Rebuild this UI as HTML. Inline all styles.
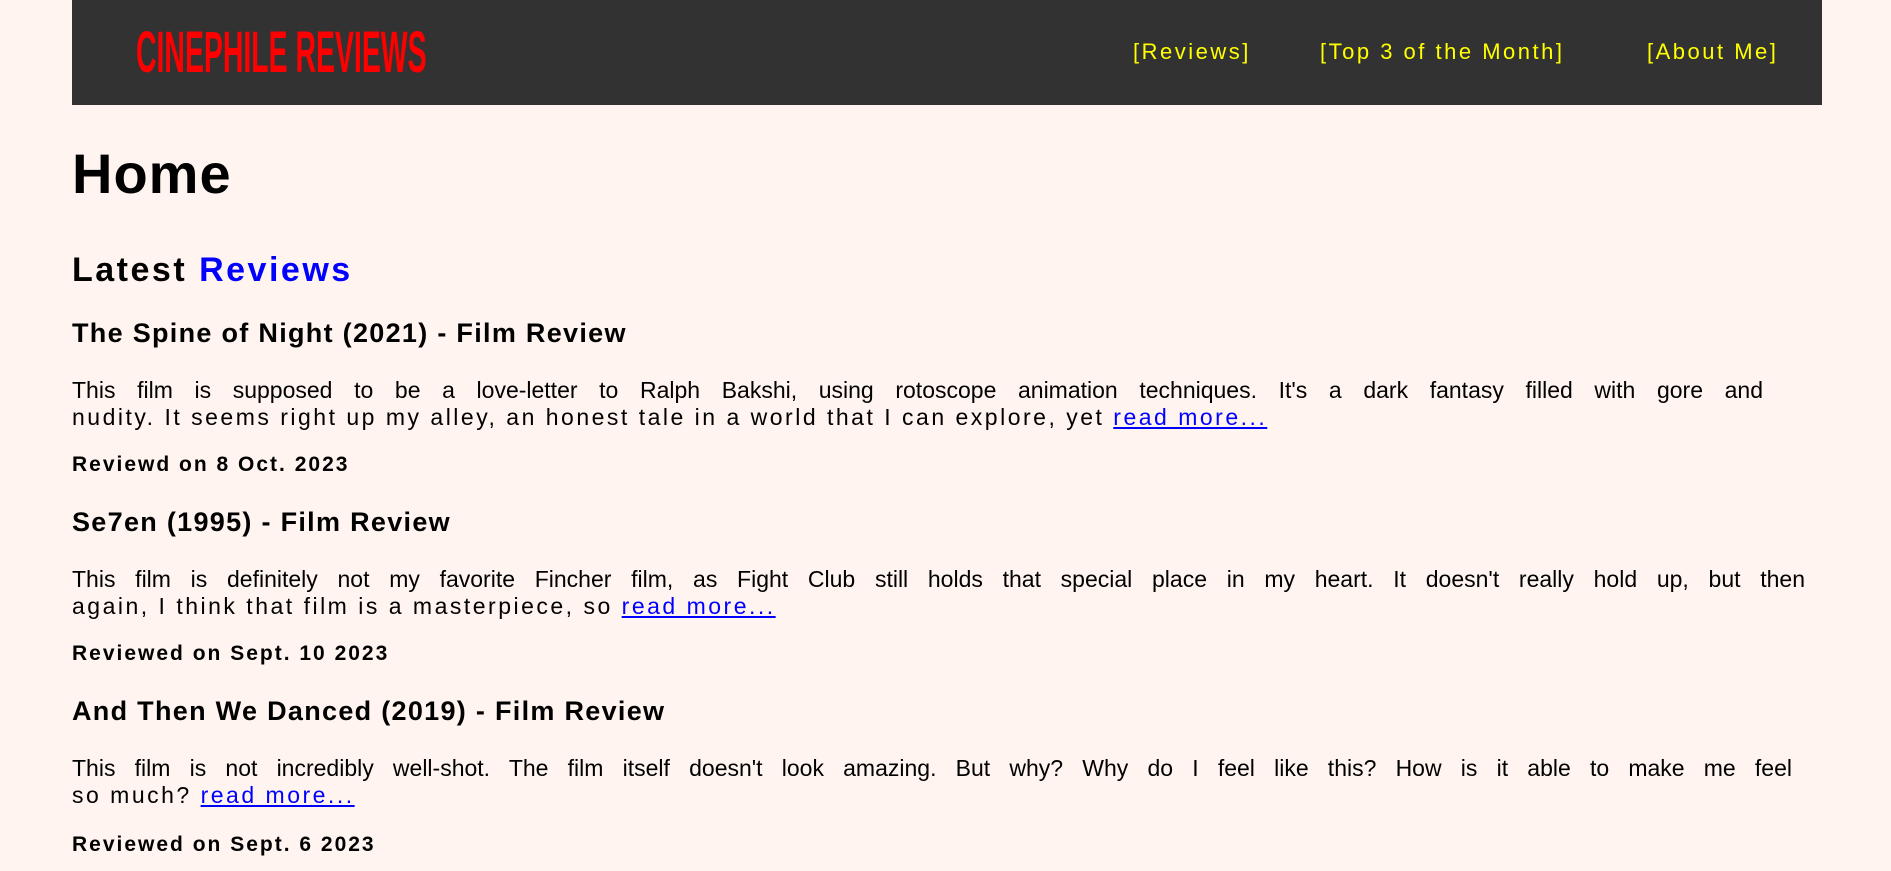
<!DOCTYPE html>
<html><head><meta charset="utf-8"><style>
body{margin:0;width:1891px;height:871px;background:#fff4ef;font-family:"Liberation Sans",sans-serif;color:#000;overflow:hidden;position:relative}
.hdr{position:absolute;left:72px;top:0;width:1750px;height:105px;background:#323232}
.logo{position:absolute;left:136px;top:23px;font-size:58px;line-height:60px;font-weight:bold;color:#ff0000;transform:scaleX(0.49);transform-origin:left top;white-space:nowrap;letter-spacing:0px}
.nav{position:absolute;top:38px;font-size:22px;line-height:28px;color:#ffff00;white-space:nowrap;letter-spacing:2.5px}
.a{position:absolute;left:72px;white-space:nowrap}
h1{position:absolute;left:72px;top:144px;margin:0;font-size:56px;line-height:60px;font-weight:bold;letter-spacing:1px}
.lat{top:250px;font-size:34px;line-height:40px;font-weight:bold;letter-spacing:2.5px}
.t{font-size:27px;line-height:30px;font-weight:bold;letter-spacing:1.3px}
.p{position:absolute;left:72px;font-size:23px;line-height:27px;letter-spacing:2.5px}
.p .j{display:block;text-align:justify;text-align-last:justify;letter-spacing:0}
.d{font-size:21px;line-height:26px;font-weight:bold;letter-spacing:2px}
a{color:#0000ff;text-decoration:underline}
</style></head><body>
<div class="hdr"></div>
<div class="logo">CINEPHILE REVIEWS</div>
<div class="nav" style="left:1133px">[Reviews]</div>
<div class="nav" style="left:1320px">[Top 3 of the Month]</div>
<div class="nav" style="left:1647px">[About Me]</div>
<h1>Home</h1>
<div class="a lat">Latest <span style="color:#0000ff">Reviews</span></div>

<div class="a t" style="top:318px">The Spine of Night (2021) - Film Review</div>
<div class="p" style="top:377px;width:1691px"><span class="j">This film is supposed to be a love-letter to Ralph Bakshi, using rotoscope animation techniques. It's a dark fantasy filled with gore and</span><span>nudity. It seems right up my alley, an honest tale in a world that I can explore, yet <a>read more...</a></span></div>
<div class="a d" style="top:452px">Reviewd on 8 Oct. 2023</div>

<div class="a t" style="top:507px">Se7en (1995) - Film Review</div>
<div class="p" style="top:566px;width:1733px"><span class="j">This film is definitely not my favorite Fincher film, as Fight Club still holds that special place in my heart. It doesn't really hold up, but then</span><span>again, I think that film is a masterpiece, so <a>read more...</a></span></div>
<div class="a d" style="top:641px">Reviewed on Sept. 10 2023</div>

<div class="a t" style="top:696px">And Then We Danced (2019) - Film Review</div>
<div class="p" style="top:755px;width:1720px"><span class="j">This film is not incredibly well-shot. The film itself doesn't look amazing. But why? Why do I feel like this? How is it able to make me feel</span><span>so much? <a>read more...</a></span></div>
<div class="a d" style="top:832px">Reviewed on Sept. 6 2023</div>
</body></html>
